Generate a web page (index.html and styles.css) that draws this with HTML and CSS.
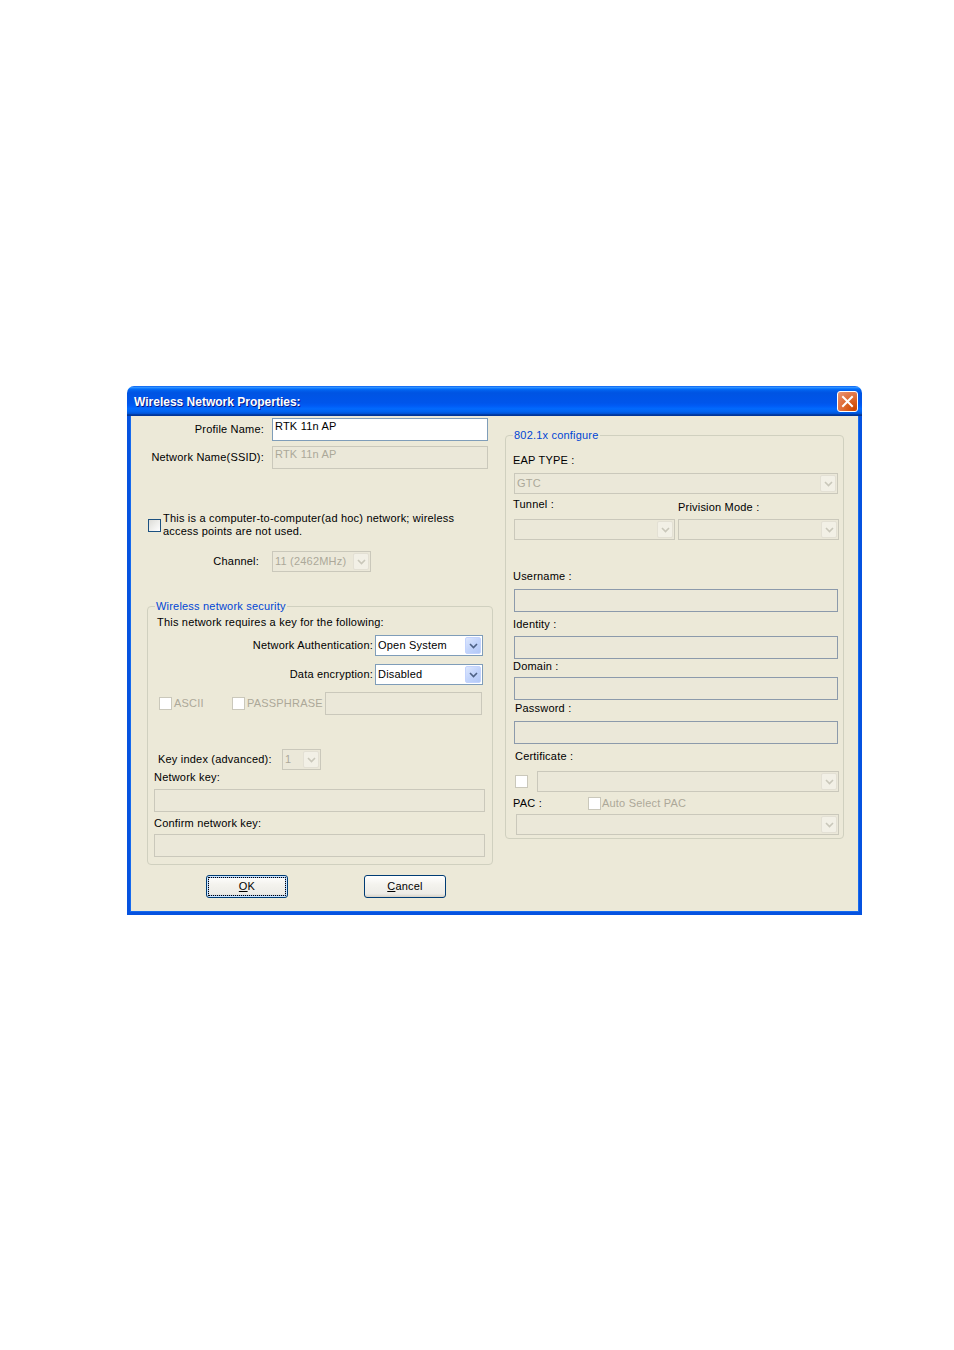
FILE: index.html
```html
<!DOCTYPE html>
<html>
<head>
<meta charset="utf-8">
<title>Wireless Network Properties</title>
<link rel="stylesheet" href="styles.css">
</head>
<body>
<div class="dialog">
  <div class="titlebar">
    <span class="title">Wireless Network Properties:</span>
    <span class="close"><svg width="13" height="13" viewBox="0 0 13 13"><path d="M2 2 L11 11 M11 2 L2 11" stroke="#fff" stroke-width="2" stroke-linecap="square"/></svg></span>
  </div>
  <div class="client">
    <div class="left">
      <div class="frow profile">
        <span class="flabel">Profile Name:</span>
        <div class="edit w216">RTK 11n AP</div>
      </div>
      <div class="frow ssid">
        <span class="flabel">Network Name(SSID):</span>
        <div class="edit dis w216">RTK 11n AP</div>
      </div>
      <div class="adhoc">
        <span class="cb"></span>
        <span class="adhoc-text">This is a computer-to-computer(ad hoc) network; wireless<br>access points are not used.</span>
      </div>
      <div class="frow channel">
        <span class="flabel ch">Channel:</span>
        <div class="combo dis w99"><span class="val">11 (2462MHz)</span><span class="arrow"><svg width="9" height="6" viewBox="0 0 9 6"><path d="M1 1 L4.5 4.5 L8 1" fill="none" stroke-width="1.6"/></svg></span></div>
      </div>

      <fieldset class="group gleft">
        <legend>Wireless network security</legend>
        <div class="txt req">This network requires a key for the following:</div>
        <div class="srow auth">
          <span class="slabel">Network Authentication:</span>
          <div class="combo w108"><span class="val">Open System</span><span class="arrow"><svg width="9" height="6" viewBox="0 0 9 6"><path d="M1 1 L4.5 4.5 L8 1" fill="none" stroke-width="1.6"/></svg></span></div>
        </div>
        <div class="srow enc">
          <span class="slabel">Data encryption:</span>
          <div class="combo w108"><span class="val">Disabled</span><span class="arrow"><svg width="9" height="6" viewBox="0 0 9 6"><path d="M1 1 L4.5 4.5 L8 1" fill="none" stroke-width="1.6"/></svg></span></div>
        </div>
        <div class="ascii-row">
          <span class="chk-item ascii"><span class="cb dis"></span><span class="distext">ASCII</span></span>
          <span class="chk-item pass"><span class="cb dis"></span><span class="distext">PASSPHRASE</span></span>
          <div class="edit dis w157"></div>
        </div>
        <div class="keyidx">
          <span class="keylabel">Key index (advanced):</span>
          <div class="combo dis w39"><span class="val">1</span><span class="arrow"><svg width="9" height="6" viewBox="0 0 9 6"><path d="M1 1 L4.5 4.5 L8 1" fill="none" stroke-width="1.6"/></svg></span></div>
        </div>
        <div class="txt netkey">Network key:</div>
        <div class="edit dis w331 netkey-in"></div>
        <div class="txt confkey">Confirm network key:</div>
        <div class="edit dis w331 confkey-in"></div>
      </fieldset>

      <div class="buttons">
        <div class="button default"><span><u>O</u>K</span></div>
        <div class="button"><span><u>C</u>ancel</span></div>
      </div>
    </div>

    <div class="right">
      <fieldset class="group gright">
        <legend>802.1x configure</legend>
        <div class="txt eap">EAP TYPE :</div>
        <div class="combo dis w324 gtc"><span class="val">GTC</span><span class="arrow"><svg width="9" height="6" viewBox="0 0 9 6"><path d="M1 1 L4.5 4.5 L8 1" fill="none" stroke-width="1.6"/></svg></span></div>
        <div class="tunnel-labels">
          <span class="tl">Tunnel :</span>
          <span class="pm">Privision Mode :</span>
        </div>
        <div class="tunnel-combos">
          <div class="combo dis w161"><span class="val"></span><span class="arrow"><svg width="9" height="6" viewBox="0 0 9 6"><path d="M1 1 L4.5 4.5 L8 1" fill="none" stroke-width="1.6"/></svg></span></div>
          <div class="combo dis w161"><span class="val"></span><span class="arrow"><svg width="9" height="6" viewBox="0 0 9 6"><path d="M1 1 L4.5 4.5 L8 1" fill="none" stroke-width="1.6"/></svg></span></div>
        </div>
        <div class="txt user">Username :</div>
        <div class="edit rdis w324 user-in"></div>
        <div class="txt ident">Identity :</div>
        <div class="edit rdis w324 ident-in"></div>
        <div class="txt domain">Domain :</div>
        <div class="edit rdis w324 domain-in"></div>
        <div class="txt pw">Password :</div>
        <div class="edit rdis w324 pw-in"></div>
        <div class="txt cert">Certificate :</div>
        <div class="cert-row">
          <span class="cb dis"></span>
          <div class="combo dis w302"><span class="val"></span><span class="arrow"><svg width="9" height="6" viewBox="0 0 9 6"><path d="M1 1 L4.5 4.5 L8 1" fill="none" stroke-width="1.6"/></svg></span></div>
        </div>
        <div class="pac-row">
          <span class="pac-label">PAC :</span>
          <span class="cb dis"></span>
          <span class="distext">Auto Select PAC</span>
        </div>
        <div class="combo dis w323 pac-combo"><span class="val"></span><span class="arrow"><svg width="9" height="6" viewBox="0 0 9 6"><path d="M1 1 L4.5 4.5 L8 1" fill="none" stroke-width="1.6"/></svg></span></div>
      </fieldset>
    </div>
  </div>
</div>
</body>
</html>
```

FILE: styles.css
```css
html, body {
  margin: 0;
  padding: 0;
  background: #ffffff;
}

body {
  font-family: "Liberation Sans", Arial, sans-serif;
  font-size: 11px;
  line-height: 13px;
  letter-spacing: 0.2px;
  color: #000;
}

.dialog {
  margin: 386px 0 0 127px;
  width: 735px;
}

.titlebar {
  height: 30px;
  box-sizing: border-box;
  display: flex;
  align-items: center;
  justify-content: space-between;
  padding: 0 4px 0 7px;
  border-radius: 7px 7px 0 0;
  background: linear-gradient(to bottom, #0058ee 0%, #3593ff 4%, #288eff 6%, #127dff 8%, #036ffc 10%, #0262ee 14%, #0057e5 20%, #0054e3 24%, #0055eb 56%, #005bf5 66%, #026afe 76%, #0062ef 86%, #0052d6 92%, #0040ab 94%, #003092 100%);
}

.title {
  color: #fff;
  font-weight: bold;
  font-size: 12px;
  letter-spacing: 0;
  text-shadow: 1px 1px 0 #0a1883;
  padding-top: 2px;
}

.close {
  width: 21px;
  height: 21px;
  box-sizing: border-box;
  border: 1px solid #fff;
  border-radius: 3px;
  background: radial-gradient(circle at 85% 90%, #cc4600 0%, #dc6527 40%, #e37b4f 70%, #e89b7c 100%);
  display: flex;
  align-items: center;
  justify-content: center;
}

.client {
  display: flex;
  height: 496px;
  background: #ece9d8;
  border: 3px solid #0552e0;
  border-top: 0;
  box-shadow: inset 1px 0 0 #166aee, inset -1px 0 0 #166aee, inset 0 -1px 0 #166aee;
}

.left {
  width: 365px;
  flex: none;
}

.right {
  margin-left: 10px;
  flex: none;
}

/* generic controls */
.edit {
  box-sizing: border-box;
  height: 23px;
  border: 1px solid #7f9db9;
  background: #fff;
  padding: 1px 2px 0 2px;
  white-space: nowrap;
  overflow: hidden;
}

.edit.dis {
  background: #ebe8d9;
  border-color: #cac8bb;
  color: #aca899;
}

.edit.rdis {
  background: #ebe8d9;
  border-color: #8c9aab;
}

.combo {
  box-sizing: border-box;
  height: 21px;
  border: 1px solid #7f9db9;
  background: #fff;
  display: flex;
  align-items: center;
  flex: none;
}

.combo .val {
  flex: 1;
  padding-left: 2px;
  white-space: nowrap;
  overflow: hidden;
}

.combo .arrow {
  box-sizing: border-box;
  width: 16px;
  height: 17px;
  margin-right: 1px;
  border: 1px solid #c3d3fd;
  border-radius: 2px;
  background: linear-gradient(135deg, #dde7fd 0%, #c2d4fb 50%, #b2c8f7 100%);
  display: flex;
  align-items: center;
  justify-content: center;
}

.combo .arrow path {
  stroke: #4d6185;
}

.combo.dis {
  background: #ebe8d9;
  border-color: #cac8bb;
  color: #aca899;
}

.combo.dis .arrow {
  background: #f2f0e6;
  border-color: #e3e0d4;
}

.combo.dis .arrow path {
  stroke: #c9c7ba;
}

.cb {
  width: 13px;
  height: 13px;
  box-sizing: border-box;
  border: 1px solid #1c5180;
  background: linear-gradient(135deg, #dcdcd7 0%, #fff 100%);
  flex: none;
}

.cb.dis {
  border-color: #cac8bb;
  background: #fff;
}

.distext {
  color: #aca899;
}

.w216 { width: 216px; }
.w99 { width: 99px; }
.w108 { width: 108px; }
.w157 { width: 157px; }
.w39 { width: 39px; }
.w331 { width: 331px; }
.w324 { width: 324px; }
.w161 { width: 161px; }
.w302 { width: 302px; }
.w323 { width: 323px; }

/* left column */
.frow {
  display: flex;
  align-items: center;
}

.flabel {
  width: 134px;
  margin-right: 8px;
  text-align: right;
  white-space: nowrap;
}

.flabel.ch {
  width: 129px;
  margin-right: 13px;
}

.profile { margin-top: 2px; }
.ssid { margin-top: 5px; }

.adhoc {
  display: flex;
  align-items: center;
  margin: 43px 0 0 18px;
}

.adhoc .cb {
  margin-right: 2px;
}

.adhoc-text {
  white-space: nowrap;
}

.channel { margin-top: 13px; }

.group {
  margin: 0;
  padding: 0;
  border: 1px solid #d0d0bf;
  border-radius: 4px;
  min-width: 0;
  box-sizing: border-box;
}

.group legend {
  margin-left: 7px;
  padding: 0 1px;
  line-height: 14px;
  color: #0046d5;
}

.gleft {
  margin: 27px 0 0 17px;
  width: 346px;
  padding-bottom: 7px;
}

.txt {
  white-space: nowrap;
}

.req { margin: 3px 0 0 9px; }

.srow {
  display: flex;
  align-items: center;
  justify-content: flex-end;
  margin-right: 9px;
}

.slabel {
  margin-right: 2px;
}

.auth { margin-top: 6px; }
.enc { margin-top: 8px; }

.ascii-row {
  display: flex;
  align-items: center;
  margin: 7px 0 0 11px;
}

.chk-item {
  display: flex;
  align-items: center;
  flex: none;
}

.chk-item .cb { margin-right: 2px; }
.chk-item.ascii { width: 73px; }
.chk-item.pass { width: 93px; }

.keyidx {
  display: flex;
  align-items: center;
  margin: 34px 0 0 10px;
}

.keylabel {
  width: 117px;
  margin-right: 7px;
  white-space: nowrap;
}

.netkey { margin: 1px 0 0 6px; }
.netkey-in { margin: 5px 0 0 6px; }
.confkey { margin: 5px 0 0 6px; }
.confkey-in { margin: 4px 0 0 6px; }

.buttons {
  display: flex;
  gap: 76px;
  margin: 10px 0 0 76px;
}

.button {
  box-sizing: border-box;
  width: 82px;
  height: 23px;
  border: 1px solid #003c74;
  border-radius: 3px;
  background: linear-gradient(to bottom, #ffffff 0%, #f4f3ee 40%, #ecebe6 85%, #d6d0c5 100%);
  display: flex;
  align-items: center;
  justify-content: center;
}

.button.default {
  box-shadow: inset 0 0 0 1px #cee7ff, inset 0 0 0 2px #98b8ea;
  outline: 1px dotted #000;
  outline-offset: -3px;
}

/* right column */
.gright {
  margin-top: 12px;
  width: 339px;
  padding-bottom: 3px;
}

.eap { margin: 12px 0 0 7px; }
.gtc { margin: 6px 0 0 8px; }

.tunnel-labels {
  display: flex;
  margin: 4px 0 0 7px;
}

.tl {
  width: 165px;
  flex: none;
}

.pm {
  padding-top: 3px;
}

.tunnel-combos {
  display: flex;
  gap: 3px;
  margin: 5px 0 0 8px;
}

.user { margin: 30px 0 0 7px; }
.user-in { margin: 6px 0 0 8px; }
.ident { margin: 6px 0 0 7px; }
.ident-in { margin: 5px 0 0 8px; }
.domain { margin: 1px 0 0 7px; }
.domain-in { margin: 4px 0 0 8px; }
.pw { margin: 2px 0 0 9px; }
.pw-in { margin: 6px 0 0 8px; }
.cert { margin: 6px 0 0 9px; }

.cert-row {
  display: flex;
  align-items: center;
  margin: 8px 0 0 9px;
}

.cert-row .cb { margin-right: 9px; }

.pac-row {
  display: flex;
  align-items: center;
  margin: 4px 0 0 7px;
  height: 14px;
}

.pac-label {
  width: 75px;
  flex: none;
}

.pac-row .cb { margin-right: 1px; }

.pac-combo { margin: 4px 0 0 10px; }
```
